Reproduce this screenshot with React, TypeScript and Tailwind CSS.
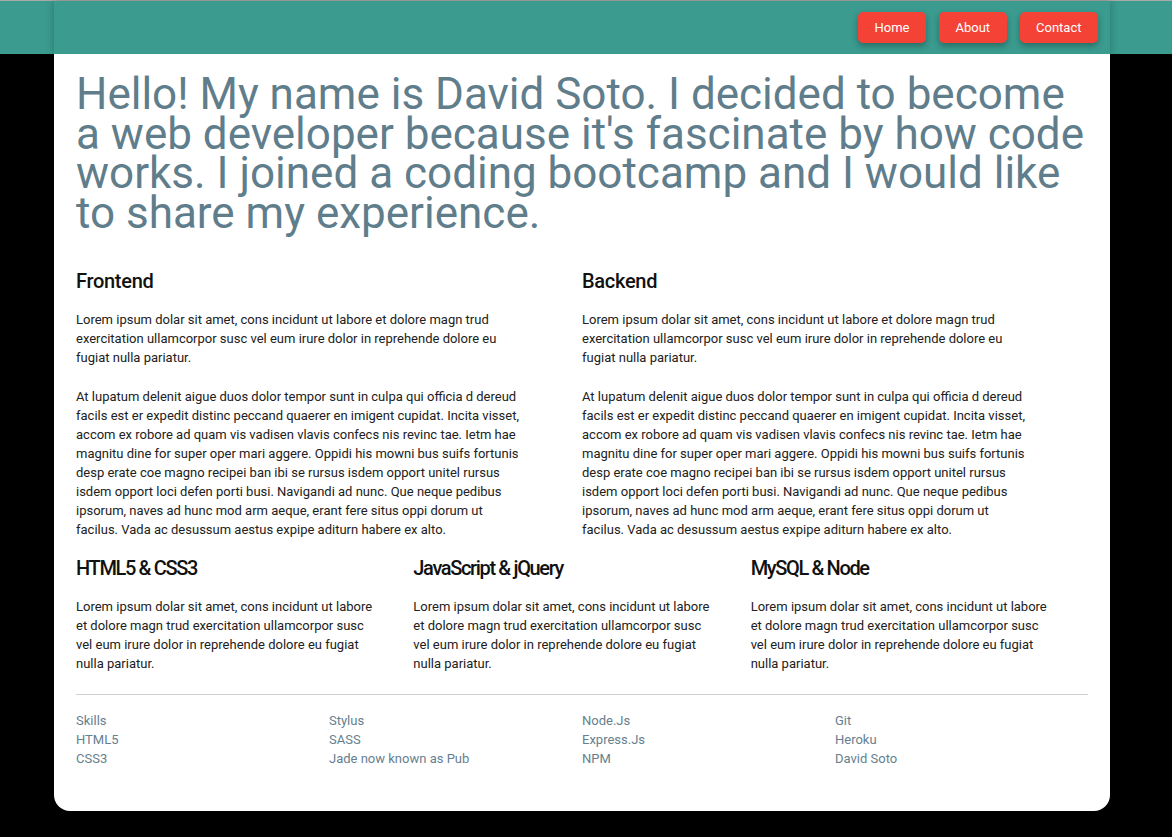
const lorem =
  "Lorem ipsum dolar sit amet, cons incidunt ut labore et dolore magn trud exercitation ullamcorpor susc vel eum irure dolor in reprehende dolore eu fugiat nulla pariatur.";
const lorem2 =
  "At lupatum delenit aigue duos dolor tempor sunt in culpa qui officia d dereud facils est er expedit distinc peccand quaerer en imigent cupidat. Incita visset, accom ex robore ad quam vis vadisen vlavis confecs nis revinc tae. Ietm hae magnitu dine for super oper mari aggere. Oppidi his mowni bus suifs fortunis desp erate coe magno recipei ban ibi se rursus isdem opport unitel rursus isdem opport loci defen porti busi. Navigandi ad nunc. Que neque pedibus ipsorum, naves ad hunc mod arm aeque, erant fere situs oppi dorum ut facilus. Vada ac desussum aestus expipe aditurn habere ex alto.";

const footer = [
  ["Skills", "HTML5", "CSS3"],
  ["Stylus", "SASS", "Jade now known as Pub"],
  ["Node.Js", "Express.Js", "NPM"],
  ["Git", "Heroku", "David Soto"],
];

function NavButton({ label }: { label: string }) {
  return (
    <a
      href="#"
      className="flex h-[31px] items-center rounded-[5px] bg-[#f44336] px-[16.5px] pt-[1px] text-[13px] text-white shadow-[0_3px_6px_rgba(0,0,0,0.3)]"
    >
      {label}
    </a>
  );
}

export default function App() {
  return (
    <div className="min-h-screen bg-black font-['Roboto',sans-serif]">
      <header className="h-[54px] border-t border-[#a9a9a9] bg-[#3a9b8e]">
        <nav className="ml-[54px] flex h-full w-[1056px] items-center justify-end gap-[13px] pr-[12px] pb-[1px] shadow-[0_0_8px_rgba(0,0,0,0.25)]">
          <NavButton label="Home" />
          <NavButton label="About" />
          <NavButton label="Contact" />
        </nav>
      </header>

      <main className="ml-[54px] w-[1056px] rounded-b-[16px] bg-white px-[22px] pt-[21px] pb-[43px]">
        <h1 className="text-[44px] leading-[39.5px] font-normal text-[#607d8b]">
          Hello! My name is David Soto. I decided to become a web developer because it's fascinate by how
          code works. I joined a coding bootcamp and I would like to share my experience.
        </h1>

        <section className="mt-[36px] grid grid-cols-2">
          {["Frontend", "Backend"].map((t) => (
            <div key={t}>
              <h3 className="text-[20px] leading-[24px] font-medium tracking-[-0.3px] text-[#111]">{t}</h3>
              <p className="mt-[17px] w-[451px] text-[13px] leading-[19px] text-[#212121]">{lorem}</p>
              <p className="mt-[20px] w-[451px] text-[13px] leading-[19px] text-[#212121]">{lorem2}</p>
            </div>
          ))}
        </section>

        <section className="mt-[17px] grid grid-cols-3">
          {["HTML5 & CSS3", "JavaScript & jQuery", "MySQL & Node"].map((t) => (
            <div key={t}>
              <h3 className="text-[20px] leading-[24px] font-medium tracking-[-1.35px] text-[#111]">{t}</h3>
              <p className="mt-[17px] w-[90%] text-[13px] leading-[19px] text-[#212121]">{lorem}</p>
            </div>
          ))}
        </section>

        <hr className="mt-[21px] border-t border-[#d0d0d0]" />

        <footer className="mt-[16px] grid grid-cols-4 text-[13px] leading-[19px] text-[#66808f]">
          {footer.map((col, i) => (
            <ul key={i}>
              {col.map((item) => (
                <li key={item}>{item}</li>
              ))}
            </ul>
          ))}
        </footer>
      </main>
    </div>
  );
}
